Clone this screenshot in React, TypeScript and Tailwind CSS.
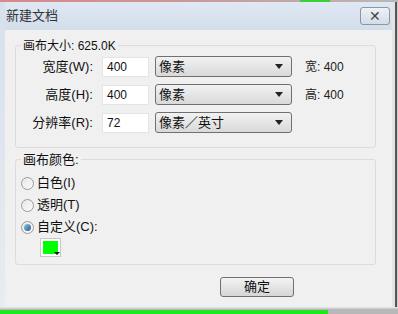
import React from "react";

const font = { fontFamily: '"Liberation Sans", "Noto Sans CJK SC", sans-serif' };

function Select({ label }: { label: string }) {
  return (
    <div className="w-[137px] h-[21px] flex items-center justify-between border border-[#707070] rounded-[3px] bg-gradient-to-b from-[#f2f2f2] to-[#d9d9d9] pl-[3px] pr-[8px] text-[13px] text-[#111]">
      <span>{label}</span>
      <span className="w-0 h-0 border-l-[4px] border-r-[4px] border-t-[5px] border-l-transparent border-r-transparent border-t-[#222]" />
    </div>
  );
}

function Row({ label, value, unit, info }: { label: string; value: string; unit: string; info?: string }) {
  return (
    <div className="flex items-center h-[21px]">
      <div className="w-[77px] text-right text-[13px] text-[#111]">{label}</div>
      <div className="ml-[9px] w-[47px] h-[20px] bg-white border border-[#e4e4e4] flex items-center pl-[4px] text-[12px] text-[#111]">{value}</div>
      <div className="ml-[6px]"><Select label={unit} /></div>
      {info && <div className="ml-[13px] text-[12px] text-[#222]">{info}</div>}
    </div>
  );
}

function Radio({ label, checked }: { label: string; checked?: boolean }) {
  return (
    <div className="flex items-center h-[16px] gap-[3px]">
      <span className="w-[13px] h-[13px] rounded-full border border-[#9a9a9a] bg-gradient-to-br from-[#e8e8e8] to-[#fafafa] flex items-center justify-center">
        {checked && <span className="w-[7px] h-[7px] rounded-full bg-gradient-to-br from-[#8fc4e8] to-[#1b5e91]" />}
      </span>
      <span className="text-[13px] text-[#111]">{label}</span>
    </div>
  );
}

export default function App() {
  return (
    <div className="w-[398px] h-[314px] bg-[#f0f0f0] overflow-hidden flex flex-col" style={font}>
      <div className="h-[2px] bg-gradient-to-r from-[#d98888] via-[#c99a9a] to-[#b8b8b8] flex">
        <div className="ml-[300px] w-[30px] bg-[#3ccf3c]" />
      </div>
      <div className="flex h-[305px]">
        <div className="w-[5px] bg-gradient-to-b from-[#d6e0ec] to-[#e8ecf1]" />
        <div className="flex-1 flex flex-col">
          <div className="h-[28px] flex items-center justify-between bg-gradient-to-b from-[#dfe8f3] to-[#d3deeb]">
            <span className="pl-[1px] text-[13px] text-[#333]">新建文档</span>
            <div className="mr-[2px] w-[30px] h-[18px] border border-[#8a97a8] rounded-[3px] bg-gradient-to-b from-[#eef2f7] to-[#d4dce7] flex items-center justify-center text-[14px] text-[#444] leading-none">✕</div>
          </div>
          <div className="flex-1 pl-[10px] pr-[12px] pt-[8px]">
            <div className="relative w-[361px] h-[103px] border border-[#dcdcdc] rounded-[3px] mt-[7px]">
              <div className="absolute -top-[9px] left-[5px] px-[2px] bg-[#f0f0f0] text-[12px] text-[#111]">画布大小: 625.0K</div>
              <div className="pt-[10px] flex flex-col gap-[7px]">
                <Row label="宽度(W):" value="400" unit="像素" info="宽:  400" />
                <Row label="高度(H):" value="400" unit="像素" info="高:  400" />
                <Row label="分辨率(R):" value="72" unit="像素／英寸" />
              </div>
            </div>
            <div className="relative w-[361px] h-[106px] border border-[#dcdcdc] rounded-[3px] mt-[11px]">
              <div className="absolute -top-[10px] left-[5px] px-[2px] bg-[#f0f0f0] text-[13px] text-[#111]">画布颜色:</div>
              <div className="pl-[5px] pt-[15px] flex flex-col gap-[6px]">
                <Radio label="白色(I)" />
                <Radio label="透明(T)" />
                <Radio label="自定义(C):" checked />
              </div>
              <div className="relative ml-[24px] mt-[3px] w-[21px] h-[19px] border border-[#c8c8c8] bg-white p-[2px]">
                <div className="w-full h-full bg-[#00ff00]" />
                <span className="absolute right-[0px] bottom-[1px] w-0 h-0 border-l-[3px] border-r-[3px] border-t-[3px] border-l-transparent border-r-transparent border-t-[#111]" />
              </div>
            </div>
            <div className="flex justify-end mt-[12px] pr-[86px]">
              <div className="w-[74px] h-[20px] border border-[#707070] rounded-[3px] bg-gradient-to-b from-[#f3f3f3] to-[#d6d6d6] flex items-center justify-center text-[13px] text-[#111]">确定</div>
            </div>
          </div>
        </div>
        <div className="w-[3px] bg-[#e4e4e4]" />
        <div className="w-[2px] bg-[#555]" />
        <div className="w-[1px] bg-[#ccc]" />
      </div>
      <div className="h-[3px] bg-gradient-to-b from-[#e8edf3] to-[#b0b0b0]" />
      <div className="h-[4px] flex">
        <div className="w-[328px] bg-[#22e622]" />
        <div className="flex-1 bg-[#b8b8b8]" />
      </div>
    </div>
  );
}
